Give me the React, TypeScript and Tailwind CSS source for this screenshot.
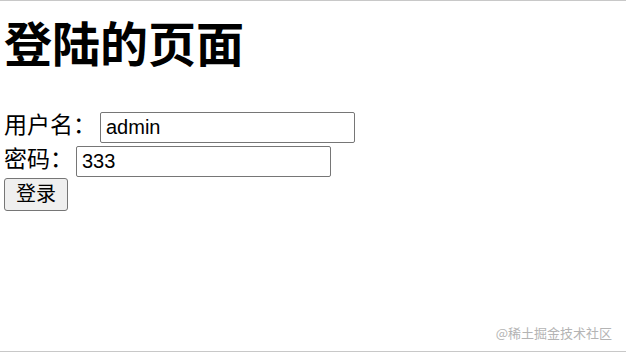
import React from "react";

export default function App() {
  const cjk = { fontFamily: '"Noto Sans CJK SC", "Liberation Sans", sans-serif' };
  return (
    <div
      className="relative w-[626px] h-[352px] bg-white border-t border-b border-[#c8c8c8] overflow-hidden text-black"
      style={cjk}
    >
      <h1 className="ml-[4px] mt-[16px] text-[48px] leading-[48px] font-bold tracking-[0px]">登陆的页面</h1>
      <div className="mt-[45px] flex flex-col">
        <div className="flex items-center h-[34px] pl-[4px]">
          <span className="w-[96px] text-[23px] leading-[26px] pb-[8px]">用户名：</span>
          <input
            defaultValue="admin"
            className="w-[255px] h-[31px] border border-[#767676] rounded-[2px] px-[5px] text-[20px] outline-none"
            style={{ fontFamily: '"Liberation Sans", Arial, sans-serif' }}
          />
        </div>
        <div className="flex items-center h-[34px] pl-[4px]">
          <span className="w-[72px] text-[23px] leading-[26px] pb-[8px]">密码：</span>
          <input
            defaultValue="333"
            className="w-[255px] h-[31px] border border-[#767676] rounded-[2px] px-[5px] text-[20px] outline-none"
            style={{ fontFamily: '"Liberation Sans", Arial, sans-serif' }}
          />
        </div>
        <div className="pl-[4px]">
          <button className="w-[64px] h-[33px] bg-[#efefef] border border-[#767676] rounded-[3px] text-[20px] leading-[20px] pb-[3px]">
            登录
          </button>
        </div>
      </div>
      <div className="absolute right-[14px] bottom-[11px] text-[13px] leading-[14px] text-[#b4b4b4]">@稀土掘金技术社区</div>
    </div>
  );
}
